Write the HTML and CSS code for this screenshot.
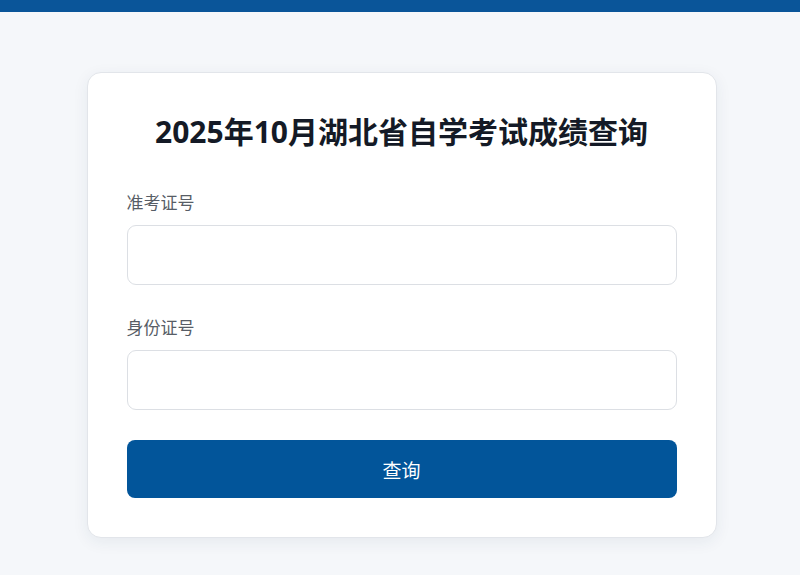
FILE: index.html
```html
<!DOCTYPE html>
<html lang="zh-CN">
<head>
<meta charset="utf-8">
<title>2025年10月湖北省自学考试成绩查询</title>
<link rel="stylesheet" href="styles.css">
</head>
<body>
<div class="topbar"></div>
<main class="page">
  <div class="card">
    <h1 class="title">2025年10月湖北省自学考试成绩查询</h1>
    <div class="field">
      <label class="label" for="zkz">准考证号</label>
      <input class="input" id="zkz" type="text">
    </div>
    <div class="field">
      <label class="label" for="sfz">身份证号</label>
      <input class="input" id="sfz" type="text">
    </div>
    <button class="btn" type="button">查询</button>
  </div>
</main>
</body>
</html>
```
FILE: styles.css
```css
* { box-sizing: border-box; }
html, body { margin: 0; padding: 0; }
body {
  background: #f5f7fa;
  font-family: "Noto Sans", "Noto Sans CJK SC", sans-serif;
  color: #1f2937;
  min-height: 575px;
}
.topbar {
  height: 12px;
  background: #0a5599;
}
.page {
  display: flex;
  justify-content: center;
  padding: 60px 0 0 3px;
}
.card {
  width: 630px;
  background: #fff;
  border: 1px solid #e2e5ea;
  border-radius: 14px;
  box-shadow: 0 4px 16px rgba(30, 50, 80, 0.07);
  padding: 40px 39px 39px;
  display: flex;
  flex-direction: column;
}
.title {
  margin: 0 0 38px;
  font-size: 30px;
  line-height: 40px;
  font-weight: 700;
  text-align: center;
  color: #141a26;
  margin-top: -1px;
  margin-bottom: 39px;
}
.field {
  display: flex;
  flex-direction: column;
  margin-bottom: 31px;
}
.field + .field { margin-bottom: 30px; }
.label {
  font-size: 17px;
  line-height: 24px;
  color: #575d66;
  margin-bottom: 10px;
}
.input {
  height: 60px;
  border: 1px solid #dcdfe4;
  border-radius: 9px;
  background: #fff;
  font-size: 16px;
  padding: 0 14px;
  outline: none;
}
.btn {
  height: 58px;
  border: none;
  border-radius: 8px;
  background: #02559a;
  color: #fff;
  font-family: "Noto Sans CJK SC", sans-serif;
  font-size: 19px;
  cursor: pointer;
}
```
